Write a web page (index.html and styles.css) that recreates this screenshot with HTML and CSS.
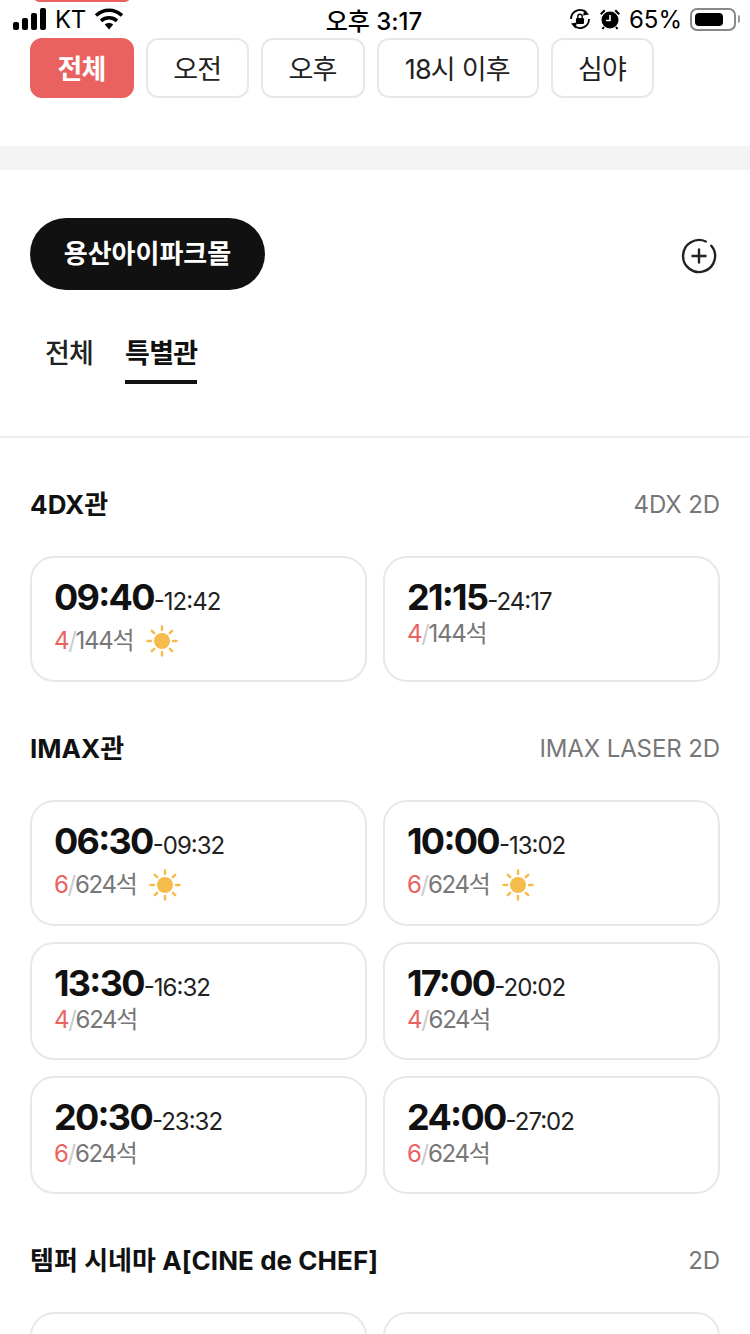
FILE: index.html
```html
<!DOCTYPE html>
<html lang="ko">
  <head>
    <meta charset="utf-8" />
    <title>상영시간표</title>
    <meta name="viewport" content="width=device-width, initial-scale=1.0" />
    <link rel="stylesheet" href="styles.css">
  </head>
  <body>
    <div class="statusBar">
      <div class="callPill"></div>
      <div class="statusLeft">
        <svg class="signal" width="34" height="22" viewBox="0 0 34 22">
          <rect x="0" y="14" width="6" height="8" rx="2" />
          <rect x="9" y="10" width="6" height="12" rx="2" />
          <rect x="18" y="5" width="6" height="17" rx="2" />
          <rect x="27" y="0" width="6" height="22" rx="2" />
        </svg>
        <span class="carrier">KT</span>
        <svg class="wifi" width="30" height="22" viewBox="0 0 30 22">
          <path d="M2 7.500C9.500 .5 20.500 .5 28 7.500" fill="none" stroke="#000" stroke-width="3.600" />
          <path d="M7 12.800C11.500 8.800 18.500 8.800 23 12.800" fill="none" stroke="#000" stroke-width="3.600" />
          <path d="M10.800 16.600C13 14.600 17 14.600 19.200 16.600L15 21.500Z" />
        </svg>
      </div>
      <div class="statusTime">오후 3:17</div>
      <div class="statusRight">
        <svg width="22" height="22" viewBox="0 0 22 22">
          <path d="M20 11A9 9 0 0 1 4.500 17.200" fill="none" stroke="#000" stroke-width="1.800" />
          <path d="M2 11A9 9 0 0 1 17.500 4.800" fill="none" stroke="#000" stroke-width="1.800" />
          <path d="M15.500 1.500L20 6.500L14 7.500ZM6.500 20.500L2 15.500L8 14.500Z" />
          <rect x="7" y="10" width="8" height="6" rx="1" />
          <path d="M8.800 10V8.500a2.200 2.200 0 0 1 4.400 0V10" fill="none" stroke="#000" stroke-width="1.400" />
        </svg>
        <svg width="22" height="22" viewBox="0 0 22 22">
          <circle cx="11" cy="12" r="8.500" />
          <path d="M11 7V12.500H7" fill="none" stroke="#fff" stroke-width="1.600" />
          <path d="M1 5.500L5 1.500L6.500 3L2.500 7ZM21 5.500L17 1.500L15.500 3L19.500 7Z" />
          <path d="M5 19L3.500 21M17 19L18.500 21" stroke="#000" stroke-width="2" />
        </svg>
        <span class="battPercent">65%</span>
        <div class="battery"><div class="batteryFill"></div></div>
        <div class="batteryTip"></div>
      </div>
    </div>

    <div class="chipRow">
      <button class="chip chipActive">전체</button>
      <button class="chip">오전</button>
      <button class="chip">오후</button>
      <button class="chip chipWide">18시 이후</button>
      <button class="chip">심야</button>
    </div>
    <div class="band"></div>

    <div class="theaterHead">
      <div class="theaterPill">용산아이파크몰</div>
      <svg class="addIcon" width="36" height="36" viewBox="0 0 36 36">
        <path d="M30.300 7.700A16 16 0 1 1 24.800 3.500" fill="none" stroke="#222" stroke-width="2.400" stroke-linecap="round" />
        <path d="M18 10.500V25.500M10.500 18H25.500" fill="none" stroke="#222" stroke-width="2.400" />
      </svg>
    </div>

    <div class="tabs">
      <div class="tab">전체</div>
      <div class="tab tabActive">특별관</div>
    </div>

    <div class="section">
      <div class="sectionHead">
        <h2 class="sectionTitle">4DX관</h2>
        <span class="sectionType">4DX 2D</span>
      </div>
      <div class="cardGrid">
        <div class="card">
          <div class="times"><span class="start">09:40</span><span class="end">-12:42</span></div>
          <div class="seats"><span class="left">4</span><span class="slash">/</span>144석
            <svg class="sun" viewBox="0 0 32 32"><use href="#sunIcon" /></svg>
          </div>
        </div>
        <div class="card">
          <div class="times"><span class="start">21:15</span><span class="end">-24:17</span></div>
          <div class="seats"><span class="left">4</span><span class="slash">/</span>144석</div>
        </div>
      </div>
    </div>

    <div class="section">
      <div class="sectionHead">
        <h2 class="sectionTitle">IMAX관</h2>
        <span class="sectionType">IMAX LASER 2D</span>
      </div>
      <div class="cardGrid">
        <div class="card">
          <div class="times"><span class="start">06:30</span><span class="end">-09:32</span></div>
          <div class="seats"><span class="left">6</span><span class="slash">/</span>624석
            <svg class="sun" viewBox="0 0 32 32"><use href="#sunIcon" /></svg>
          </div>
        </div>
        <div class="card">
          <div class="times"><span class="start">10:00</span><span class="end">-13:02</span></div>
          <div class="seats"><span class="left">6</span><span class="slash">/</span>624석
            <svg class="sun" viewBox="0 0 32 32"><use href="#sunIcon" /></svg>
          </div>
        </div>
        <div class="card">
          <div class="times"><span class="start">13:30</span><span class="end">-16:32</span></div>
          <div class="seats"><span class="left">4</span><span class="slash">/</span>624석</div>
        </div>
        <div class="card">
          <div class="times"><span class="start">17:00</span><span class="end">-20:02</span></div>
          <div class="seats"><span class="left">4</span><span class="slash">/</span>624석</div>
        </div>
        <div class="card">
          <div class="times"><span class="start">20:30</span><span class="end">-23:32</span></div>
          <div class="seats"><span class="left">6</span><span class="slash">/</span>624석</div>
        </div>
        <div class="card">
          <div class="times"><span class="start">24:00</span><span class="end">-27:02</span></div>
          <div class="seats"><span class="left">6</span><span class="slash">/</span>624석</div>
        </div>
      </div>
    </div>

    <div class="section">
      <div class="sectionHead">
        <h2 class="sectionTitle">템퍼 시네마 A[CINE de CHEF]</h2>
        <span class="sectionType">2D</span>
      </div>
      <div class="cardGrid">
        <div class="card"></div>
        <div class="card"></div>
      </div>
    </div>

    <svg class="defs" width="0" height="0">
      <symbol id="sunIcon" viewBox="0 0 32 32">
        <circle cx="16" cy="16" r="8" fill="#f5bb4b" />
        <path d="M16 1.500V5M16 27V30.500M1.500 16H5M27 16H30.500M5.800 5.800L8.200 8.200M23.800 23.800L26.200 26.200M5.800 26.200L8.200 23.800M23.800 8.200L26.200 5.800" stroke="#f5bb4b" stroke-width="2.400" stroke-linecap="round" fill="none" />
      </symbol>
    </svg>
  </body>
</html>
```

FILE: styles.css
```css
* {
  box-sizing: border-box;
}
html,
body {
  margin: 0;
  height: 1334px;
  overflow: hidden;
}
body {
  background: #fff;
  color: #111;
  font-family: Inter, "Noto Sans CJK KR", sans-serif;
}
.statusBar {
  position: relative;
  height: 38px;
  display: flex;
  justify-content: space-between;
  align-items: center;
  padding: 1px 10px 1px 13px;
  color: #000;
  font-size: 24px;
}
.callPill {
  position: absolute;
  left: 34px;
  top: -8px;
  width: 96px;
  height: 10px;
  border-radius: 5px;
  background: #ea625f;
}
.statusLeft,
.statusRight {
  display: flex;
  align-items: center;
  width: 240px;
}
.statusLeft {
  gap: 8px;
}
.carrier {
  letter-spacing: -0.5px;
}
.statusRight {
  justify-content: flex-end;
  gap: 8px;
}
.statusTime {
  font-weight: 500;
  font-size: 24px;
  margin-left: -5px;
}
.battery {
  width: 46px;
  height: 23px;
  padding: 3px;
  border: 2px solid #888;
  border-radius: 7px;
}
.batteryFill {
  width: 28px;
  height: 100%;
  border-radius: 4px;
  background: #000;
}
.batteryTip {
  width: 2px;
  height: 8px;
  margin-left: -6px;
  border-radius: 0 2px 2px 0;
  background: #999;
}
.chipRow {
  display: flex;
  gap: 12px;
  height: 108px;
  padding-left: 30px;
}
.chip {
  width: 103.400px;
  height: 60px;
  padding: 0 1px 2px 0;
  background: #fff;
  border: 2px solid #e8e8e8;
  border-radius: 12px;
  color: #222;
  font-family: inherit;
  font-size: 27px;
  letter-spacing: -0.8px;
}
.chipWide {
  width: 162px;
}
.chipActive {
  width: 104px;
  background: #ea625f;
  border-color: #ea625f;
  color: #fff;
  font-weight: 700;
}
.band {
  height: 24px;
  background: #f3f3f3;
}
.theaterHead {
  display: flex;
  justify-content: space-between;
  align-items: center;
  padding: 48px 33px 0 30px;
}
.addIcon {
  margin-top: 3px;
}
.theaterPill {
  width: 235px;
  height: 72px;
  border-radius: 36px;
  background: #111;
  color: #fff;
  font-size: 26px;
  font-weight: 700;
  line-height: 72px;
  text-align: center;
}
.tabs {
  display: flex;
  gap: 32px;
  height: 148px;
  padding: 42px 0 0 45px;
  border-bottom: 2px solid #eee;
}
.tab {
  height: 52px;
  font-size: 27px;
  font-weight: 500;
  line-height: 44px;
  letter-spacing: -0.8px;
  color: #222;
}
.tabActive {
  font-weight: 700;
  border-bottom: 4px solid #111;
  color: #111;
}
.section {
  padding: 0 30px;
}
.sectionHead {
  display: flex;
  justify-content: space-between;
  align-items: center;
  height: 118px;
  padding-top: 10px;
}
.sectionTitle {
  margin: 0;
  font-size: 26px;
  font-weight: 700;
  letter-spacing: 0.05px;
}
.sectionType {
  margin-top: 4px;
  font-size: 24px;
  letter-spacing: -0.1px;
  color: #777;
}
.cardGrid {
  display: grid;
  grid-template-columns: 337px 337px;
  column-gap: 16px;
  row-gap: 16px;
}
.card {
  min-height: 118px;
  padding: 18px 22px 17px;
  border: 2px solid #e8e8e8;
  border-radius: 24px;
  background: #fff;
}
.times {
  display: flex;
  align-items: baseline;
  height: 42px;
  font-feature-settings: "calt" 1;
}
.start {
  font-size: 36px;
  font-weight: 700;
  line-height: 42px;
  letter-spacing: -1.700px;
}
.end {
  font-size: 24px;
  letter-spacing: -1px;
  color: #222;
}
.seats {
  display: flex;
  align-items: center;
  margin-top: 1px;
  font-size: 24px;
  letter-spacing: -1.300px;
  color: #777;
  line-height: 30px;
}
.left {
  color: #ea625f;
}
.slash {
  color: #ccc;
}
.sun {
  width: 32px;
  height: 32px;
  margin: 6px 0 6px 13px;
}
.defs {
  position: absolute;
}
```
